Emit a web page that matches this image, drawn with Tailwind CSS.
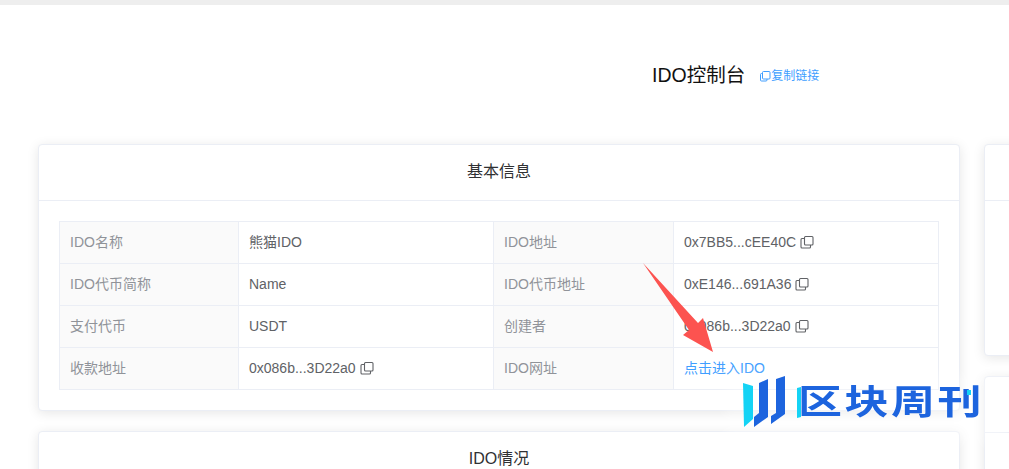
<!DOCTYPE html>
<html lang="zh">
<head>
<meta charset="utf-8">
<script src="https://cdn.jsdelivr.net/npm/@tailwindcss/browser@4"></script>
</head>
<body class="bg-white">
<div class="relative h-[469px] w-[1009px] overflow-hidden bg-white font-['Liberation_Sans','Noto_Sans_CJK_SC',sans-serif] text-[14px] text-[#606266]">
  <div class="h-[5px] bg-[#eeeeee]"></div>

  <div class="flex h-[139px] items-start pl-[652px] pt-[58px]">
    <h1 class="text-[19.5px] leading-[24px] font-normal text-[#111111]">IDO控制台</h1>
    <a class="ml-[14px] flex items-center pt-[5px] text-[12px] leading-[16px] text-[#409eff]">
      <svg class="h-3 w-3" viewBox="0 0 12 12" fill="none" stroke="currentColor" stroke-width="1"><rect x="3.5" y="1.5" width="7.5" height="7.5" rx="1"/><path d="M3.5 3.5H2.5a1 1 0 0 0-1 1V10a1 1 0 0 0 1 1H7a1 1 0 0 0 1-1V9"/></svg>复制链接
    </a>
  </div>

  <div class="flex items-start gap-[24px] pl-[38px]">
    <div class="flex w-[922px] shrink-0 flex-col gap-[20px]">
      <section class="h-[267px] rounded border border-[#ebeef5] bg-white shadow-[0_2px_12px_0_rgba(0,0,0,0.1)]">
        <div class="flex h-[56px] items-center justify-center border-b border-[#ebeef5] pb-[2px] text-[16px] text-[#303133]">基本信息</div>
        <div class="p-[20px]">
          <div class="grid grid-cols-[179px_255px_180px_265px] grid-rows-[42px_42px_42px_42px] border-t border-l border-[#ebeef5] text-[14px]">
            <div class="flex items-center border-r border-b border-[#ebeef5] bg-[#fafafa] pl-[10px] text-[#909399]">IDO名称</div>
            <div class="flex items-center border-r border-b border-[#ebeef5] pl-[10px]">熊猫IDO</div>
            <div class="flex items-center border-r border-b border-[#ebeef5] bg-[#fafafa] pl-[10px] text-[#909399]">IDO地址</div>
            <div class="flex items-center border-r border-b border-[#ebeef5] pl-[10px]">0x7BB5...cEE40C<svg class="mb-[2px] ml-[4px] h-[14px] w-[14px]" viewBox="0 0 14 14" fill="none" stroke="currentColor" stroke-width="1.1"><rect x="4.5" y="1.5" width="8.5" height="8.5" rx="1"/><path d="M4.5 3.5H2a1 1 0 0 0-1 1V12a1 1 0 0 0 1 1h7.5a1 1 0 0 0 1-1v-2"/></svg></div>

            <div class="flex items-center border-r border-b border-[#ebeef5] bg-[#fafafa] pl-[10px] text-[#909399]">IDO代币简称</div>
            <div class="flex items-center border-r border-b border-[#ebeef5] pl-[10px]">Name</div>
            <div class="flex items-center border-r border-b border-[#ebeef5] bg-[#fafafa] pl-[10px] text-[#909399]">IDO代币地址</div>
            <div class="flex items-center border-r border-b border-[#ebeef5] pl-[10px]">0xE146...691A36<svg class="mb-[2px] ml-[4px] h-[14px] w-[14px]" viewBox="0 0 14 14" fill="none" stroke="currentColor" stroke-width="1.1"><rect x="4.5" y="1.5" width="8.5" height="8.5" rx="1"/><path d="M4.5 3.5H2a1 1 0 0 0-1 1V12a1 1 0 0 0 1 1h7.5a1 1 0 0 0 1-1v-2"/></svg></div>

            <div class="flex items-center border-r border-b border-[#ebeef5] bg-[#fafafa] pl-[10px] text-[#909399]">支付代币</div>
            <div class="flex items-center border-r border-b border-[#ebeef5] pl-[10px]">USDT</div>
            <div class="flex items-center border-r border-b border-[#ebeef5] bg-[#fafafa] pl-[10px] text-[#909399]">创建者</div>
            <div class="flex items-center border-r border-b border-[#ebeef5] pl-[10px]">0x086b...3D22a0<svg class="mb-[2px] ml-[4px] h-[14px] w-[14px]" viewBox="0 0 14 14" fill="none" stroke="currentColor" stroke-width="1.1"><rect x="4.5" y="1.5" width="8.5" height="8.5" rx="1"/><path d="M4.5 3.5H2a1 1 0 0 0-1 1V12a1 1 0 0 0 1 1h7.5a1 1 0 0 0 1-1v-2"/></svg></div>

            <div class="flex items-center border-r border-b border-[#ebeef5] bg-[#fafafa] pl-[10px] text-[#909399]">收款地址</div>
            <div class="flex items-center border-r border-b border-[#ebeef5] pl-[10px]">0x086b...3D22a0<svg class="mb-[2px] ml-[4px] h-[14px] w-[14px]" viewBox="0 0 14 14" fill="none" stroke="currentColor" stroke-width="1.1"><rect x="4.5" y="1.5" width="8.5" height="8.5" rx="1"/><path d="M4.5 3.5H2a1 1 0 0 0-1 1V12a1 1 0 0 0 1 1h7.5a1 1 0 0 0 1-1v-2"/></svg></div>
            <div class="flex items-center border-r border-b border-[#ebeef5] bg-[#fafafa] pl-[10px] text-[#909399]">IDO网址</div>
            <div class="flex items-center border-r border-b border-[#ebeef5] pl-[10px] text-[#409eff]">点击进入IDO</div>
          </div>
        </div>
      </section>
      <section class="h-[100px] rounded border border-[#ebeef5] bg-white shadow-[0_2px_12px_0_rgba(0,0,0,0.1)]">
        <div class="flex h-[54px] items-center justify-center text-[16px] text-[#303133]">IDO情况</div>
      </section>
    </div>
    <div class="flex w-[300px] shrink-0 flex-col gap-[20px]">
      <section class="h-[212px] rounded border border-[#ebeef5] bg-white shadow-[0_2px_12px_0_rgba(0,0,0,0.1)]">
        <div class="h-[56px] border-b border-[#ebeef5]"></div>
      </section>
      <section class="h-[100px] rounded border border-[#ebeef5] bg-white shadow-[0_2px_12px_0_rgba(0,0,0,0.1)]">
        <div class="h-[56px] border-b border-[#ebeef5]"></div>
      </section>
    </div>
  </div>

  <!-- annotation arrow -->
  <svg class="absolute top-[262px] left-[640px] h-[94px] w-[76px]" viewBox="0 0 76 94">
    <path d="M3 1 L58 61 L63 56 L73 90 L43 73 L49 68 Z" fill="#fc5350"/>
  </svg>

  <!-- watermark -->
  <div class="absolute top-[374px] left-[725px] h-[70px] w-[284px] bg-white/30 blur-[6px]"></div>
  <svg class="absolute top-[376px] left-[743px] h-[54px] w-[58px]" viewBox="0 0 58 54">
    <path d="M0 7 L10 10 V43 L1 51 Z" fill="#14d3f5"/>
    <path d="M16 7 L25 3 V41 L11 51 V41 L16 37 Z" fill="#1d64de"/>
    <path d="M33 3 L42 0 V38 L28 48 V40 L33 37 Z" fill="#1d64de"/>
    <path d="M54 12 L58 11 V41 L54 42 Z" fill="#14d3f5"/>
  </svg>
  <div class="absolute top-[376px] left-[798px] origin-left scale-y-[0.78] text-[44px] leading-[52px] font-bold tracking-[2.5px] whitespace-nowrap text-[#1d64de]">区块周刊</div>
  <div class="absolute top-[390px] left-[967px] h-[5px] w-[4px] bg-[#14d3f5]"></div>
</div>
</body>
</html>
